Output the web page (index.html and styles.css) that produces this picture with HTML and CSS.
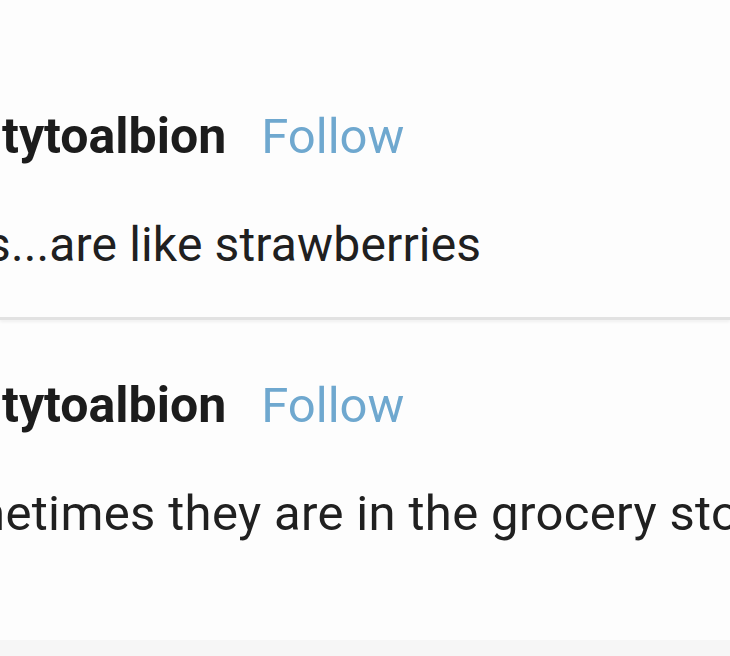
FILE: index.html
```html
<!DOCTYPE html>
<html>
<head>
<meta charset="utf-8">
<link rel="stylesheet" href="styles.css">
</head>
<body>
<div class="page">
  <section class="post post-first">
    <div class="post-head">
      <span class="name">tytoalbion</span>
      <span class="follow">Follow</span>
    </div>
    <p class="post-text text-first">s...are like strawberries</p>
  </section>
  <div class="divider"></div>
  <section class="post post-second">
    <div class="post-head">
      <span class="name">tytoalbion</span>
      <span class="follow">Follow</span>
    </div>
    <p class="post-text text-second">netimes they are in the grocery sto</p>
  </section>
  <div class="footer-strip"></div>
</div>
</body>
</html>
```

FILE: styles.css
```css
html, body {
  margin: 0;
  padding: 0;
  background: #fdfdfd;
}

.page {
  width: 730px;
  height: 656px;
  overflow: hidden;
  display: flex;
  flex-direction: column;
  font-family: Roboto, "Liberation Sans", sans-serif;
  color: #1e1e1e;
}

.post {
  padding-left: 2px;
  overflow: hidden;
}

.post-first {
  padding-top: 108px;
  height: 209px;
}

.post-second {
  padding-top: 57px;
  flex: 1;
}

.post-head {
  display: flex;
  align-items: baseline;
  gap: 35px;
  line-height: 56px;
  height: 56px;
}

.name {
  font-size: 50px;
  font-weight: 700;
  color: #1c1c1c;
}

.follow {
  font-size: 49px;
  font-weight: 400;
  color: #6fa8cf;
}

.post-text {
  margin: 53px 0 0 0;
  font-size: 48px;
  line-height: 56px;
  white-space: nowrap;
  color: #202020;
}

.text-first {
  margin-left: -16px;
  letter-spacing: 0.15px;
}

.text-second {
  margin-left: -24px;
  font-size: 49px;
  letter-spacing: 0.35px;
}

.divider {
  height: 3px;
  background: #e2e2e2;
  box-shadow: 0 2px 3px rgba(0, 0, 0, 0.06);
}

.footer-strip {
  height: 16px;
  background: #f6f6f6;
}
```
